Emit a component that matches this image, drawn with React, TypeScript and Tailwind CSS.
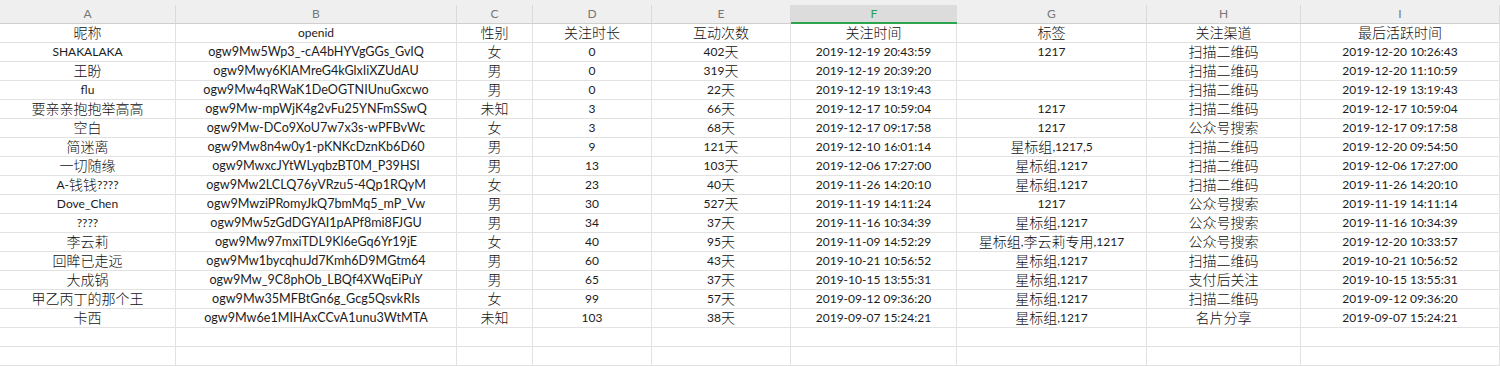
import React from "react";

const letters = ["A", "B", "C", "D", "E", "F", "G", "H", "I"];

const rows: string[][] = [
  ["昵称", "openid", "性别", "关注时长", "互动次数", "关注时间", "标签", "关注渠道", "最后活跃时间"],
  ["SHAKALAKA", "ogw9Mw5Wp3_-cA4bHYVgGGs_GvIQ", "女", "0", "402天", "2019-12-19 20:43:59", "1217", "扫描二维码", "2019-12-20 10:26:43"],
  ["王盼", "ogw9Mwy6KlAMreG4kGlxIiXZUdAU", "男", "0", "319天", "2019-12-19 20:39:20", "", "扫描二维码", "2019-12-20 11:10:59"],
  ["flu", "ogw9Mw4qRWaK1DeOGTNIUnuGxcwo", "男", "0", "22天", "2019-12-19 13:19:43", "", "扫描二维码", "2019-12-19 13:19:43"],
  ["要亲亲抱抱举高高", "ogw9Mw-mpWjK4g2vFu25YNFmSSwQ", "未知", "3", "66天", "2019-12-17 10:59:04", "1217", "扫描二维码", "2019-12-17 10:59:04"],
  ["空白", "ogw9Mw-DCo9XoU7w7x3s-wPFBvWc", "女", "3", "68天", "2019-12-17 09:17:58", "1217", "公众号搜索", "2019-12-17 09:17:58"],
  ["简迷离", "ogw9Mw8n4w0y1-pKNKcDznKb6D60", "男", "9", "121天", "2019-12-10 16:01:14", "星标组,1217,5", "扫描二维码", "2019-12-20 09:54:50"],
  ["一切随缘", "ogw9MwxcJYtWLyqbzBT0M_P39HSI", "男", "13", "103天", "2019-12-06 17:27:00", "星标组,1217", "扫描二维码", "2019-12-06 17:27:00"],
  ["A-钱钱????", "ogw9Mw2LCLQ76yVRzu5-4Qp1RQyM", "女", "23", "40天", "2019-11-26 14:20:10", "星标组,1217", "扫描二维码", "2019-11-26 14:20:10"],
  ["Dove_Chen", "ogw9MwziPRomyJkQ7bmMq5_mP_Vw", "男", "30", "527天", "2019-11-19 14:11:24", "1217", "公众号搜索", "2019-11-19 14:11:14"],
  ["????", "ogw9Mw5zGdDGYAI1pAPf8mi8FJGU", "男", "34", "37天", "2019-11-16 10:34:39", "星标组,1217", "公众号搜索", "2019-11-16 10:34:39"],
  ["李云莉", "ogw9Mw97mxiTDL9Kl6eGq6Yr19jE", "女", "40", "95天", "2019-11-09 14:52:29", "星标组,李云莉专用,1217", "公众号搜索", "2019-12-20 10:33:57"],
  ["回眸已走远", "ogw9Mw1bycqhuJd7Kmh6D9MGtm64", "男", "60", "43天", "2019-10-21 10:56:52", "星标组,1217", "扫描二维码", "2019-10-21 10:56:52"],
  ["大成锅", "ogw9Mw_9C8phOb_LBQf4XWqEiPuY", "男", "65", "37天", "2019-10-15 13:55:31", "星标组,1217", "支付后关注", "2019-10-15 13:55:31"],
  ["甲乙丙丁的那个王", "ogw9Mw35MFBtGn6g_Gcg5QsvkRIs", "女", "99", "57天", "2019-09-12 09:36:20", "星标组,1217", "扫描二维码", "2019-09-12 09:36:20"],
  ["卡西", "ogw9Mw6e1MIHAxCCvA1unu3WtMTA", "未知", "103", "38天", "2019-09-07 15:24:21", "星标组,1217", "名片分享", "2019-09-07 15:24:21"],
  ["", "", "", "", "", "", "", "", ""],
  ["", "", "", "", "", "", "", "", ""],
];

// split latin / cjk runs so each gets its own size
function Text({ value, wide }: { value: string; wide?: boolean }) {
  const parts = value.match(/[\u3000-\u9fff]+|[^\u3000-\u9fff]+/g) || [];
  return (
    <>
      {parts.map((p, i) =>
        /[\u3000-\u9fff]/.test(p) ? (
          <span key={i} className="text-[14px] font-light text-[#111]">
            {p}
          </span>
        ) : (
          <span
            key={i}
            className={wide ? "text-[12.6px] text-[#1c1c1c]" : "text-[12px] text-[#1c1c1c]"}
          >
            {p}
          </span>
        )
      )}
    </>
  );
}

export default function App() {
  return (
    <div
      className="w-[1500px] h-[366px] overflow-hidden bg-white"
      style={{ fontFamily: '"Lato", "Noto Sans CJK SC", sans-serif' }}
    >
      <div className="h-[5px] bg-[#efefef]"></div>
      <div className="grid grid-cols-[176px_281px_76px_119px_139px_166px_190px_154px_1fr] bg-[#efefef]">
        {letters.map((l) =>
          l === "F" ? (
            <div
              key={l}
              className="h-[19px] flex items-center justify-center bg-[#dcdcdc] border-b-2 border-[#2ea44f] text-[12px] text-[#2e9e4f]"
            >
              {l}
            </div>
          ) : (
            <div
              key={l}
              className="h-[19px] flex items-center justify-center border-r border-b border-r-[#dadada] border-b-[#cfcfcf] text-[12px] text-[#777]"
            >
              {l}
            </div>
          )
        )}
      </div>
      {rows.map((r, ri) => (
        <div
          key={ri}
          className="grid grid-cols-[176px_281px_76px_119px_139px_166px_190px_154px_1fr]"
        >
          {r.map((c, ci) => (
            <div
              key={ci}
              className="h-[19px] flex items-center justify-center whitespace-nowrap overflow-hidden border-r border-b border-[#e2e2e2] leading-none"
            >
              <Text value={c} wide={(ci === 1 && ri > 0) || (ci === 0 && ri === 0)} />
            </div>
          ))}
        </div>
      ))}
    </div>
  );
}
